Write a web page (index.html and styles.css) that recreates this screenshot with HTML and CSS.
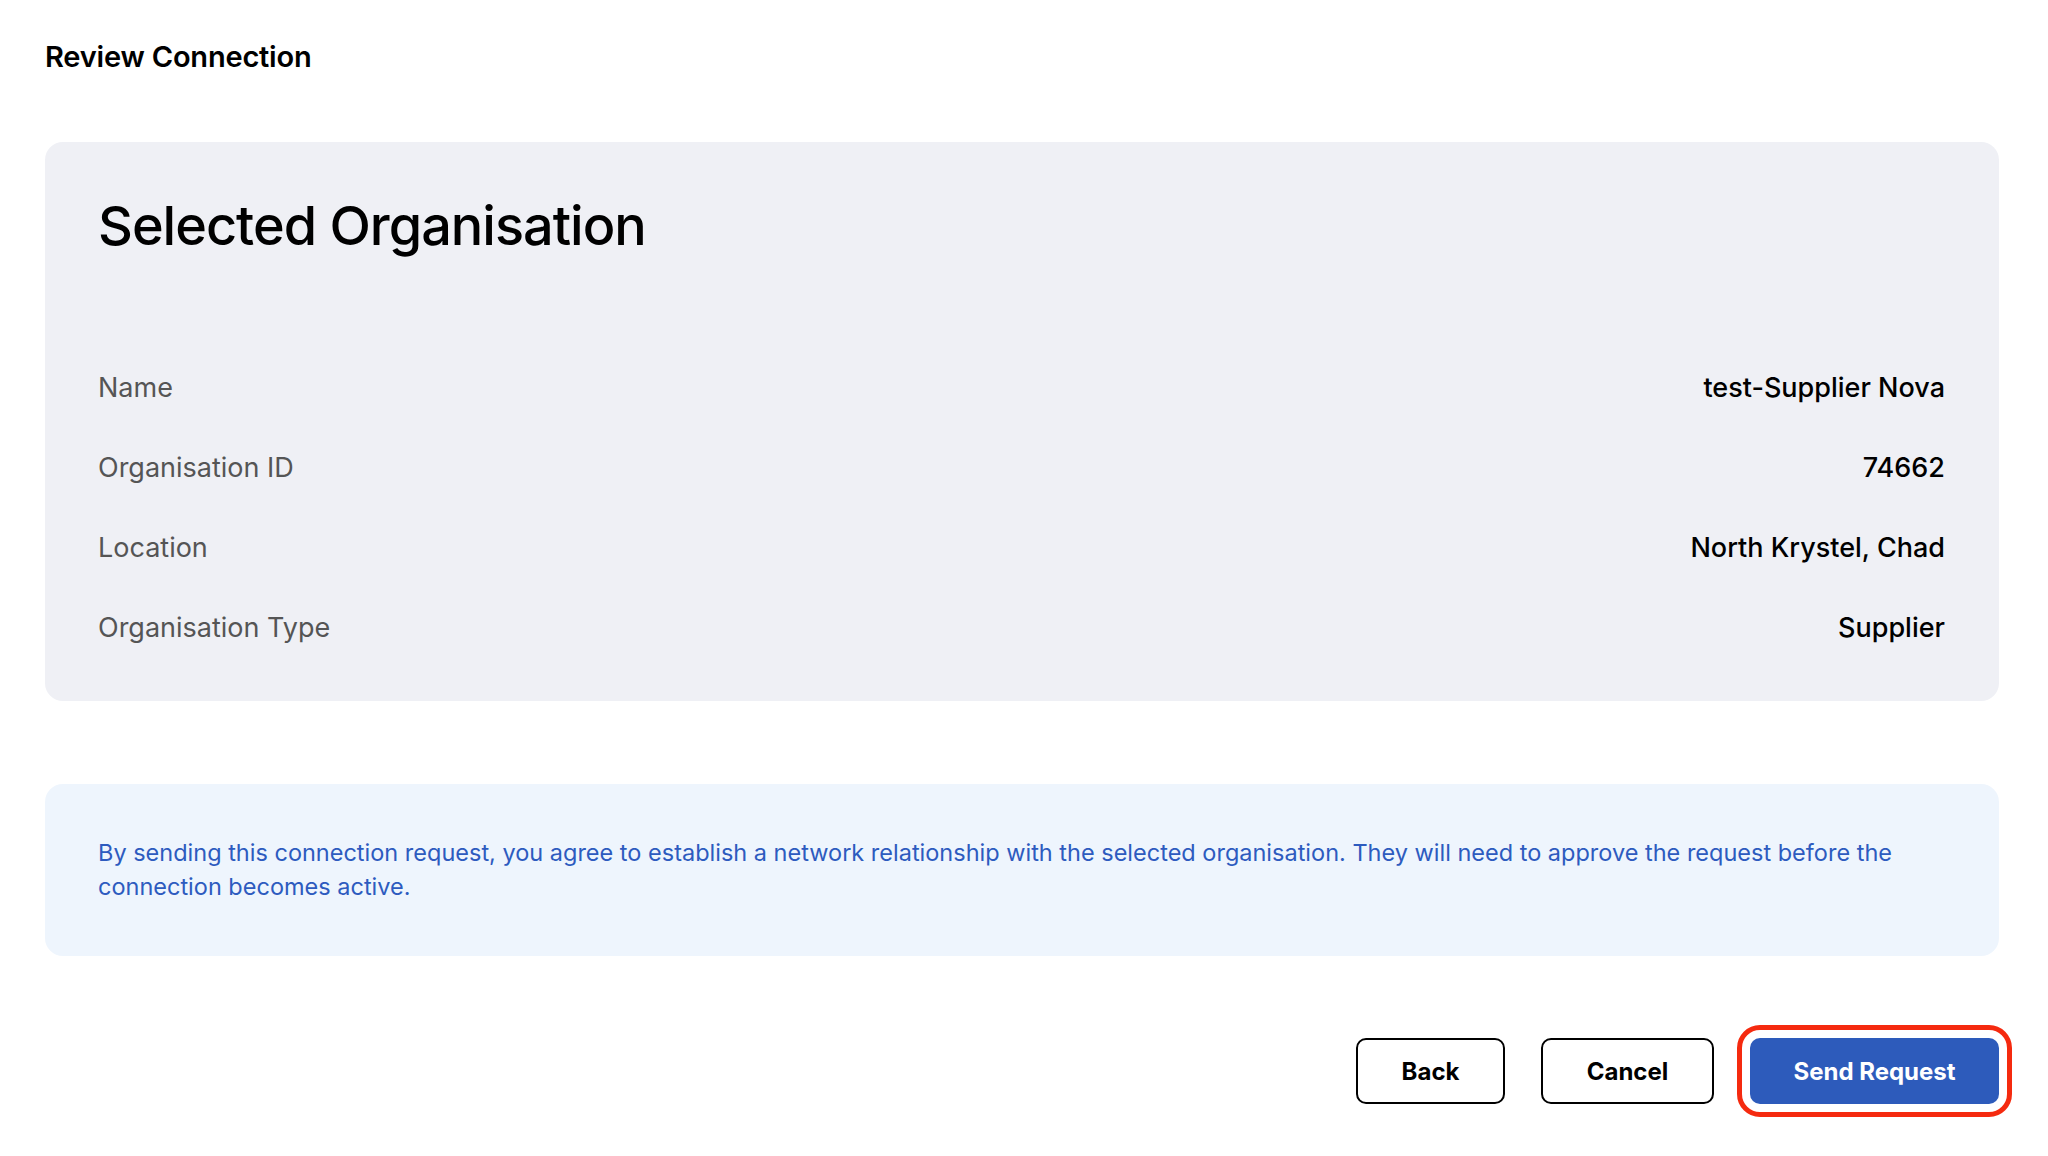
FILE: index.html
```html
<!DOCTYPE html>
<html lang="en">
<head>
    <meta charset="UTF-8">
    <meta name="viewport" content="width=device-width, initial-scale=1.0">
    <title>Review Connection</title>
    <link rel="stylesheet" href="styles.css">
</head>
<body>
    <div class="page">
        <h1 class="page-title">Review Connection</h1>

        <section class="org-card">
            <h2>Selected Organisation</h2>
            <dl class="org-details">
                <div class="detail-row">
                    <dt>Name</dt>
                    <dd>test-Supplier Nova</dd>
                </div>
                <div class="detail-row">
                    <dt>Organisation ID</dt>
                    <dd>74662</dd>
                </div>
                <div class="detail-row">
                    <dt>Location</dt>
                    <dd>North Krystel, Chad</dd>
                </div>
                <div class="detail-row">
                    <dt>Organisation Type</dt>
                    <dd>Supplier</dd>
                </div>
            </dl>
        </section>

        <div class="notice">
            By sending this connection request, you agree to establish a network relationship with the selected organisation. They will need to approve the request before the connection becomes active.
        </div>

        <div class="actions">
            <button class="btn btn-outline" id="back">Back</button>
            <button class="btn btn-outline" id="cancel">Cancel</button>
            <button class="btn btn-primary focused" id="send">Send Request</button>
        </div>
    </div>
</body>
</html>
```

FILE: styles.css
```css
/* Review connection page */
body {
    margin: 0;
    padding: 0;
    font-family: Inter, "Noto Sans", sans-serif;
    background-color: #fff;
    color: #000;
}
.page {
    padding: 35px 49px 40px 45px;
}
.page-title {
    margin: 0 0 63px;
    font-size: 29px;
    font-weight: 600;
    line-height: 44px;
    letter-spacing: -0.2px;
}
.org-card {
    background-color: #eff0f5;
    border-radius: 18px;
    padding: 50px 54px 55px 53px;
}
.org-card h2 {
    margin: 0 0 110px;
    font-size: 54px;
    font-weight: 500;
    line-height: 68px;
    letter-spacing: -1px;
}
.org-details {
    margin: 0;
    display: flex;
    flex-direction: column;
    gap: 44px;
}
.detail-row {
    display: flex;
    justify-content: space-between;
    align-items: center;
    font-size: 27px;
    line-height: 36px;
}
.detail-row dt {
    color: #555;
}
.detail-row dd {
    margin: 0;
    font-weight: 500;
    color: #000;
}
.notice {
    margin-top: 83px;
    background-color: #eef5fd;
    border-radius: 18px;
    padding: 52px 53px;
    color: #2d5bbf;
    font-size: 23.5px;
    line-height: 34px;
}
.actions {
    margin-top: 82px;
    display: flex;
    justify-content: flex-end;
    gap: 36px;
}
.btn {
    height: 66px;
    padding: 0 36px;
    border-radius: 10px;
    font-family: inherit;
    font-size: 24px;
    font-weight: 700;
    cursor: pointer;
}
.btn-outline {
    background-color: #fff;
    border: 2px solid #000;
    color: #000;
}
#back {
    width: 149px;
}
#cancel {
    width: 173px;
}
.btn-primary {
    width: 249px;
    background-color: #2d5bbb;
    border: none;
    color: #fff;
}
.focused {
    outline: 5px solid #f52a0f;
    outline-offset: 8px;
}
```
